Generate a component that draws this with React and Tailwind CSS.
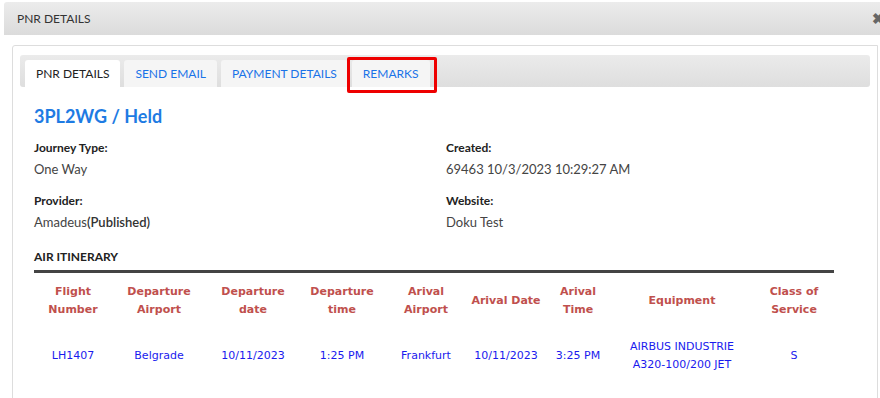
import React from "react";

const tabs = ["PNR DETAILS", "SEND EMAIL", "PAYMENT DETAILS", "REMARKS"];

const columns = [
  { w: "w-[78px]", label: ["Flight", "Number"] },
  { w: "w-[94px]", label: ["Departure", "Airport"] },
  { w: "w-[94px]", label: ["Departure", "date"] },
  { w: "w-[84px]", label: ["Departure", "time"] },
  { w: "w-[84px]", label: ["Arival", "Airport"] },
  { w: "w-[76px]", label: ["Arival Date"] },
  { w: "w-[68px]", label: ["Arival", "Time"] },
  { w: "w-[140px]", label: ["Equipment"] },
  { w: "w-[84px]", label: ["Class of", "Service"] },
];

const row = [
  ["LH1407"],
  ["Belgrade"],
  ["10/11/2023"],
  ["1:25 PM"],
  ["Frankfurt"],
  ["10/11/2023"],
  ["3:25 PM"],
  ["AIRBUS INDUSTRIE", "A320-100/200 JET"],
  ["S"],
];

function Info({ label, value }) {
  return (
    <div>
      <div className="text-[12px] leading-[20px] font-bold text-[#222]">{label}</div>
      <div className="text-[13px] leading-[20px] text-[#444] mt-[1px]">{value}</div>
    </div>
  );
}

export default function App() {
  return (
    <div className="w-[880px] h-[398px] overflow-hidden bg-white font-['Lato','Open_Sans',sans-serif] pt-[2px]">
      {/* modal header */}
      <div className="ml-[4px] h-[33px] flex items-center justify-between rounded-tl-[3px] bg-gradient-to-b from-[#ececec] to-[#dbdbdb] pl-[13px]">
        <span className="text-[12px] text-[#333]">PNR DETAILS</span>
        <span className="text-[15px] font-bold text-[#666] leading-none mr-[-5px]">✖</span>
      </div>

      {/* panel */}
      <div className="ml-[12px] mr-[2px] mt-[10px] border border-[#dddddd] rounded-tl-[3px] px-[7px] pt-[9px] h-[360px]">
        {/* tab bar */}
        <div className="h-[32px] rounded-[3px] bg-gradient-to-b from-[#ebebeb] to-[#dedede] flex items-end gap-[4px] pl-[5px]">
          {tabs.map((t, i) => (
            <div
              key={t}
              className={
                i === 0
                  ? "relative h-[27px] px-[11px] flex items-center rounded-t-[3px] bg-white text-[12px] text-[#222]"
                  : "relative h-[27px] px-[11px] flex items-center rounded-t-[3px] bg-[#f5f5f5] text-[12px] text-[#1a73e8]"
              }
            >
              {t}
              {t === "REMARKS" && (
                <div className="absolute left-[-5px] right-[-7px] top-[-3px] bottom-[-6px] border-[3px] border-[#ee0000] rounded-[2px]"></div>
              )}
            </div>
          ))}
        </div>

        <div className="px-[14px]">
          <div className="mt-[17px] h-[24px] leading-[24px] text-[18px] font-bold text-[#1e7be3]">3PL2WG / Held</div>

          <div className="grid grid-cols-[412px_1fr] mt-[10px] gap-y-[12px]">
            <Info label="Journey Type:" value="One Way" />
            <Info label="Created:" value="69463 10/3/2023 10:29:27 AM" />
            <Info
              label="Provider:"
              value={
                <span>
                  Amadeus<span className="font-semibold text-[#333]">(Published)</span>
                </span>
              }
            />
            <Info label="Website:" value="Doku Test" />
          </div>

          <div className="w-[800px] mt-[15px] text-[12px] leading-[20px] font-bold text-[#222] pb-[3px] border-b-[3px] border-[#444]">
            AIR ITINERARY
          </div>

          <table className="w-[802px] table-fixed font-['DejaVu_Sans','Verdana',sans-serif] text-[11px] leading-[18px]">
            <thead>
              <tr>
                {columns.map((c, i) => (
                  <th key={i} className={c.w + " py-[10px] text-center font-bold text-[#c0504d] align-middle"}>
                    {c.label.map((l) => (
                      <div key={l}>{l}</div>
                    ))}
                  </th>
                ))}
              </tr>
            </thead>
            <tbody>
              <tr>
                {row.map((cell, i) => (
                  <td key={i} className="py-[9px] text-center text-[#1a1aee] align-middle">
                    {cell.map((l) => (
                      <div key={l}>{l}</div>
                    ))}
                  </td>
                ))}
              </tr>
            </tbody>
          </table>
        </div>
      </div>
    </div>
  );
}
